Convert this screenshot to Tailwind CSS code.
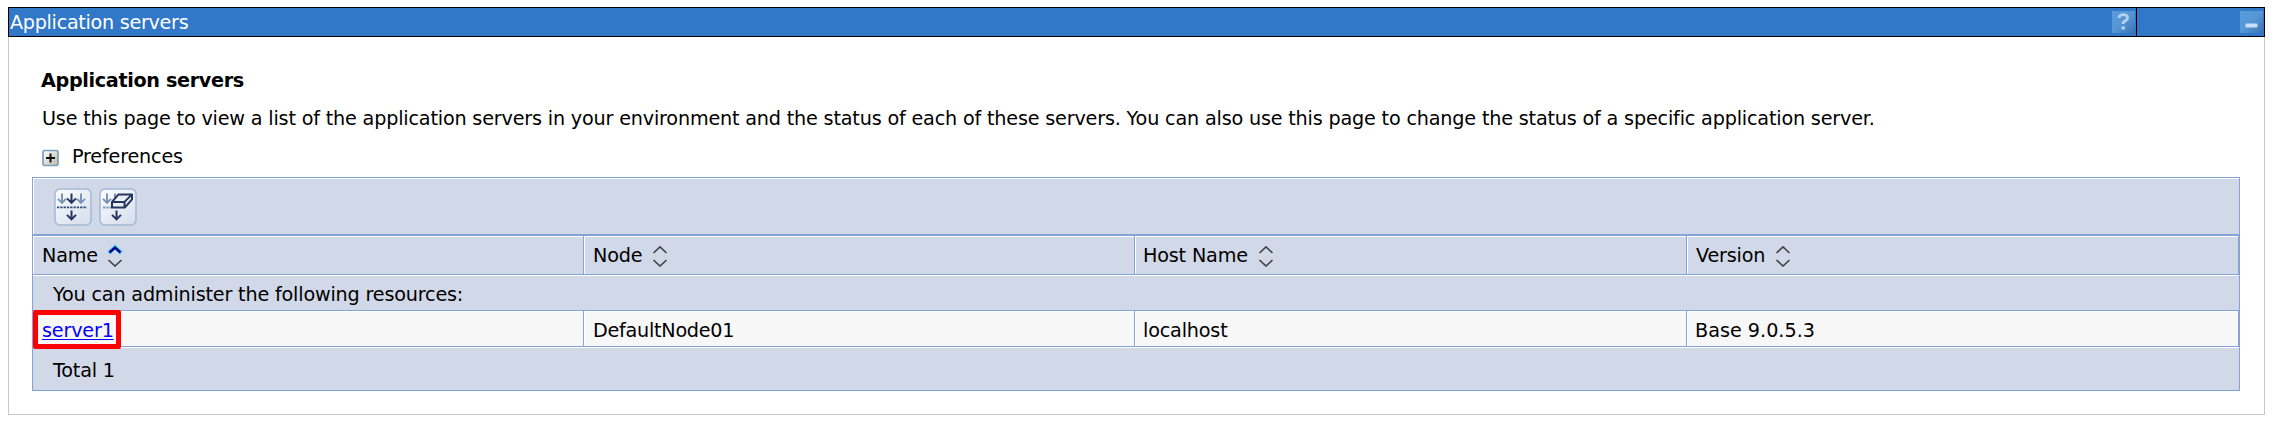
<!DOCTYPE html>
<html lang="en">
<head>
<meta charset="utf-8">
<title>Application servers</title>
<script src="https://cdn.jsdelivr.net/npm/@tailwindcss/browser@4"></script>
</head>
<body class="bg-white text-black font-['Verdana','DejaVu_Sans',sans-serif] text-[19.2px] leading-[24px] tracking-[-0.18px] whitespace-nowrap">
<svg class="hidden">
  <symbol id="sort" viewBox="0 0 16 24"><path d="M1.500 10 8 4l6.500 6M1.500 17l6.500 6 6.500-6" fill="none" stroke="#444" stroke-width="1.700"/></symbol>
</svg>
<div class="pt-[7px] pl-2">
<main class="w-[2257px] h-[408px] border border-t-0 border-[#c8c8c8]">
  <header class="-mx-px h-[30px] flex border border-black bg-[#3178c8] text-white">
    <div class="flex-1 flex items-center justify-between border-r border-black pl-px pr-px">
      <h1 class="pt-[2px] tracking-[-0.3px]">Application servers</h1>
      <svg class="size-[23px]" viewBox="0 0 23 23"><defs><linearGradient id="tb" x1="0" y1="0" x2="1" y2="1"><stop offset="0" stop-color="#5a9bdc"/><stop offset=".5" stop-color="#5596d4"/><stop offset="1" stop-color="#3b72b2"/></linearGradient></defs><rect width="23" height="22" fill="url(#tb)"/><path d="M7 7C7 2.500 16 2.500 15.500 7c0 3-4.500 2.500-4.500 6" fill="none" stroke="#b4d3f1" stroke-width="2.800"/><rect x="9.500" y="15.500" width="3.500" height="3" fill="#b4d3f1"/></svg>
    </div>
    <div class="w-[127px] flex items-center justify-end pr-px">
      <svg class="size-[23px]" viewBox="0 0 23 23"><rect width="23" height="22" fill="url(#tb)"/><rect x="5.500" y="12.500" width="12" height="4" rx=".5" fill="#c9e0f6"/></svg>
    </div>
  </header>
  <div class="pl-[23px] pr-6">
    <div class="pl-[10px]">
      <h2 class="-ml-px font-bold pt-8 tracking-[-0.34px]">Application servers</h2>
      <p class="pt-[14px]">Use this page to view a list of the application servers in your environment and the status of each of these servers. You can also use this page to change the status of a specific application server.</p>
      <div class="pt-[14px] flex items-center">
        <svg class="w-[17px] h-[18px] mt-[2px]" viewBox="0 0 17 18"><defs><linearGradient id="pl" x1="0" y1="0" x2="1" y2="1"><stop offset="0" stop-color="#fff"/><stop offset="1" stop-color="#bdb9ad"/></linearGradient></defs><rect x="1" y="1.500" width="15" height="15" rx="1.500" fill="url(#pl)" stroke="#7d9ebd" stroke-width="1.700"/><path d="M4 9h9M8.500 4.500v9" stroke="#111" stroke-width="2"/></svg>
        <span class="pl-[13px]">Preferences</span>
      </div>
    </div>
    <section class="mt-[8px] w-[2208px] border border-[#86a2d8] bg-[#d1d8e8]">
      <div class="h-[56px] border-t border-l border-white flex items-start gap-[7px] pl-[20px] pt-[9px]">
        <svg class="size-[38px]" viewBox="0 0 38 38"><defs><linearGradient id="bt" x1="0" y1="0" x2=".7" y2="1"><stop offset="0" stop-color="#fdfdfe"/><stop offset="1" stop-color="#d9e1ee"/></linearGradient></defs><rect x="1" y="1" width="36" height="36" rx="5" fill="url(#bt)" stroke="#a3b9d6" stroke-width="1.500"/><g fill="none" stroke-width="2" transform="translate(-1 -.6)"><path d="M9 6v9M5 11.500l4 4 4-4M28 6v9M24 11.500l4 4 4-4" stroke="#7896b8"/><path d="M18.500 6v9M14 11l4.500 4.500L23 11M18.500 23v9M14 27.500l4.500 4.500 4.500-4.500" stroke="#24365f"/><path d="M4 20h30" stroke="#344a75" stroke-dasharray="2.300 1" stroke-width="1.800"/></g></svg>
        <svg class="size-[38px]" viewBox="0 0 38 38"><rect x="1" y="1" width="36" height="36" rx="5" fill="url(#bt)" stroke="#a3b9d6" stroke-width="1.500"/><g fill="none" stroke-width="2" transform="translate(-1 -.6)"><path d="M9 6v9M5 11.500l4 4 4-4M17 6v7" stroke="#7896b8"/><path d="M5 20h9" stroke="#7896b8" stroke-dasharray="2.300 1"/><path d="M18.500 23v9M14 27.500l4.500 4.500 4.500-4.500" stroke="#24365f"/><path d="M14 20v-5.500L20.500 7H34v5l-7 8zM14 14.500h12.500L34 7M26.500 14.500V20" fill="#e9eef6" stroke="#24365f" stroke-linejoin="round"/></g></svg>
      </div>
      <div class="border-y border-t-2 border-r border-[#86a2d8] h-[41px] grid grid-cols-[551px_551px_552px_1fr] [&>div]:border-[#86a2d8]">
        <div class="border-r"><div class="h-full border-t border-l border-white pl-2 pt-[7px] flex gap-[9px]">Name
          <svg class="w-4 h-6 -mt-px" viewBox="0 0 16 24"><path d="M1.500 10 8 4l6.500 6" fill="none" stroke="#4fd0e8" stroke-width="4"/><path d="M2.500 9.500 8 4.500l5.500 5" fill="none" stroke="#000090" stroke-width="2.400"/><path d="M1.500 17l6.500 6 6.500-6" fill="none" stroke="#444" stroke-width="1.700"/></svg></div></div>
        <div class="border-r"><div class="h-full border-t border-l border-white pl-2 pt-[7px] flex gap-[10px]">Node<svg class="w-4 h-6 -mt-px"><use href="#sort"/></svg></div></div>
        <div class="border-r"><div class="h-full border-t border-l border-white pl-[7px] pt-[7px] flex gap-[10px]">Host Name<svg class="w-4 h-6 -mt-px"><use href="#sort"/></svg></div></div>
        <div><div class="h-full border-t border-l border-white pl-2 pt-[7px] flex gap-[10px]">Version<svg class="w-4 h-6 -mt-px"><use href="#sort"/></svg></div></div>
      </div>
      <div class="h-[35px] border-t border-white pl-[20px] pt-[7px] tracking-[-0.18px]">You can administer the following resources:</div>
      <div class="border-y border-r border-[#86a2d8] h-[37px] grid grid-cols-[551px_551px_552px_1fr] bg-[#f7f7f7] [&>div]:border-[#86a2d8]">
        <div class="border-r relative"><div class="h-full border-t border-l border-white pl-2 pt-[7px]"><a href="#" class="text-[#0000ff] underline decoration-1 underline-offset-2">server1</a></div>
          <div class="absolute left-0 -top-px w-[88px] h-[39px] border-5 border-[#ff0000] rounded-[2px]"></div></div>
        <div class="border-r"><div class="h-full border-t border-l border-white pl-2 pt-[7px] tracking-[-0.26px]">DefaultNode01</div></div>
        <div class="border-r"><div class="h-full border-t border-l border-white pl-[7px] pt-[7px]">localhost</div></div>
        <div><div class="h-full border-t border-l border-white pl-[7px] pt-[7px] tracking-normal">Base 9.0.5.3</div></div>
      </div>
      <div class="h-[43px] border-t border-white pl-[20px] pt-[11px]">Total 1</div>
    </section>
  </div>
</main>
</div>
</body>
</html>
